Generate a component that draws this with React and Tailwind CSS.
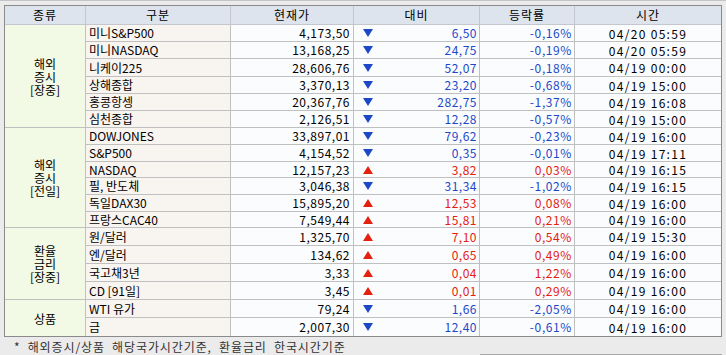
import React from "react";

const groups = [
  {
    label: ["해외", "증시", "[장중]"],
    span: "row-span-6",
    rows: [
      ["미니S&P500", "4,173,50", "d", "6,50", "-0,16%", "04/20 05:59"],
      ["미니NASDAQ", "13,168,25", "d", "24,75", "-0,19%", "04/20 05:59"],
      ["니케이225", "28,606,76", "d", "52,07", "-0,18%", "04/19 00:00"],
      ["상해종합", "3,370,13", "d", "23,20", "-0,68%", "04/19 15:00"],
      ["홍콩항셍", "20,367,76", "d", "282,75", "-1,37%", "04/19 16:08"],
      ["심천종합", "2,126,51", "d", "12,28", "-0,57%", "04/19 15:00"],
    ],
  },
  {
    label: ["해외", "증시", "[전일]"],
    span: "row-span-6",
    rows: [
      ["DOWJONES", "33,897,01", "d", "79,62", "-0,23%", "04/19 16:00"],
      ["S&P500", "4,154,52", "d", "0,35", "-0,01%", "04/19 17:11"],
      ["NASDAQ", "12,157,23", "u", "3,82", "0,03%", "04/19 16:15"],
      ["필, 반도체", "3,046,38", "d", "31,34", "-1,02%", "04/19 16:15"],
      ["독일DAX30", "15,895,20", "u", "12,53", "0,08%", "04/19 16:00"],
      ["프랑스CAC40", "7,549,44", "u", "15,81", "0,21%", "04/19 16:00"],
    ],
  },
  {
    label: ["환율", "금리", "[장중]"],
    span: "row-span-4",
    rows: [
      ["원/달러", "1,325,70", "u", "7,10", "0,54%", "04/19 15:30"],
      ["엔/달러", "134,62", "u", "0,65", "0,49%", "04/19 16:00"],
      ["국고채3년", "3,33", "u", "0,04", "1,22%", "04/19 16:00"],
      ["CD [91일]", "3,45", "u", "0,01", "0,29%", "04/19 16:00"],
    ],
  },
  {
    label: ["상품"],
    span: "row-span-2",
    rows: [
      ["WTI 유가", "79,24", "d", "1,66", "-2,05%", "04/19 16:00"],
      ["금", "2,007,30", "d", "12,40", "-0,61%", "04/19 16:00"],
    ],
  },
];

function Tri({ dir }) {
  if (dir === "u") {
    return (
      <svg width="10" height="8" viewBox="0 0 10 8" className="block">
        <polygon points="5,0 10,8 0,8" fill="#e4200e" />
      </svg>
    );
  }
  return (
    <svg width="10" height="8" viewBox="0 0 10 8" className="block">
      <polygon points="0,0 10,0 5,8" fill="#1c48c8" />
    </svg>
  );
}

export default function App() {
  const font = { fontFamily: '"Noto Sans CJK KR", "Noto Sans", sans-serif' };
  const header = ["종류", "구분", "현재가", "대비", "등락률", "시간"];
  const totalRows = groups.reduce((a, g) => a + g.rows.length, 0);
  let idx = 0;
  return (
    <div
      className="w-[726px] h-[355px] bg-[#ebebeb] border-t border-[#c4c4c4] text-[12px] text-black overflow-hidden"
      style={font}
    >
      <div className="ml-[4px] mt-[4px] w-[718px] border border-[#8a8a8a]">
        <div className="grid grid-cols-[81px_145px_123px_126px_95px_146px] grid-rows-[19px_17px_17px_18px_17px_17px_17px_17px_17px_16px_17px_17px_16px_18px_18px_18px_18px_18px_18px]">
          {header.map((h, i) => (
            <div
              key={h}
              className={`bg-[#dde4ed] border-b border-[#c4c8ce] flex items-center justify-center leading-none tracking-[1px] ${
                i < 5 ? "border-r" : ""
              }`}
            >
              {h}
            </div>
          ))}
          {groups.map((g, gi) => {
            const cells = [];
            const lastGroup = gi === groups.length - 1;
            cells.push(
              <div
                key={`g${gi}`}
                className={`${g.span} bg-[#f2f9e5] border-r border-[#c0c0c0] flex flex-col items-center justify-center leading-[13px] ${
                  lastGroup ? "" : "border-b"
                }`}
              >
                {g.label.map((l) => (
                  <span key={l}>{l}</span>
                ))}
              </div>
            );
            g.rows.forEach((r, ri) => {
              idx += 1;
              const last = idx === totalRows;
              const bb = last ? "" : "border-b";
              const color = r[2] === "u" ? "text-[#e4200e]" : "text-[#1c48c8]";
              cells.push(
                <div
                  key={`a${gi}-${ri}`}
                  className={`bg-[#f8f4f0] border-r border-[#c0c0c0] ${bb} flex items-center pl-[3px] leading-none`}
                >
                  {r[0]}
                </div>,
                <div
                  key={`b${gi}-${ri}`}
                  className={`bg-[#fbfcfe] border-r border-[#c0c0c0] ${bb} flex items-center justify-end pr-[3px] leading-none tracking-[0.5px]`}
                >
                  {r[1]}
                </div>,
                <div
                  key={`c${gi}-${ri}`}
                  className={`bg-[#fbfcfe] border-r border-[#c0c0c0] ${bb} flex items-center justify-between pl-[9px] pr-[2px] leading-none tracking-[0.5px] ${color}`}
                >
                  <Tri dir={r[2]} />
                  <span>{r[3]}</span>
                </div>,
                <div
                  key={`d${gi}-${ri}`}
                  className={`bg-[#fbfcfe] border-r border-[#c0c0c0] ${bb} flex items-center justify-end pr-[2px] leading-none tracking-[0.6px] ${color}`}
                >
                  {r[4]}
                </div>,
                <div
                  key={`e${gi}-${ri}`}
                  className={`bg-[#fbfcfe] border-[#c0c0c0] ${bb} flex items-center justify-center pt-[1px] leading-none tracking-[1.3px] whitespace-pre`}
                >
                  {r[5]}
                </div>
              );
            });
            return cells;
          })}
        </div>
      </div>
      <div className="h-[17px] pt-[2px] pl-[14px] flex items-center text-[#333333] tracking-[0.9px] leading-none whitespace-pre">
        *  해외증시/상품  해당국가시간기준,  환율금리  한국시간기준
      </div>
      <div className="ml-[480px] w-[242px] h-[2px] border-t border-l border-[#a8a8a8]"></div>
    </div>
  );
}
